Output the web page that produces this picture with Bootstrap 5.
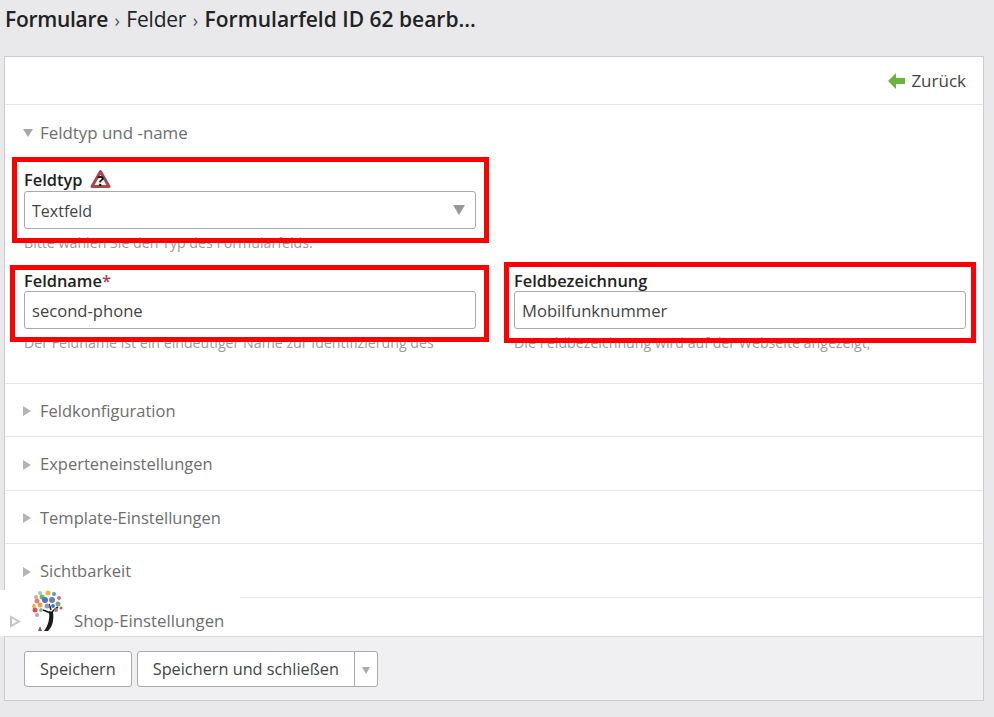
<!DOCTYPE html>
<html lang="de">
<head>
<meta charset="utf-8">
<title>Formularfeld bearbeiten</title>
<link href="https://cdn.jsdelivr.net/npm/bootstrap@5.3.0/dist/css/bootstrap.min.css" rel="stylesheet">
<style>
html,body{height:717px;overflow:hidden}
body{background:#e9e9ec;font-family:"Open Sans","Noto Sans",sans-serif;color:#333;font-size:16px}
.page-title{height:56px;margin:0;padding:5px 0 0 5px;font-size:21px;line-height:28px;font-weight:400;color:#222;font-family:"Open Sans",sans-serif}
.page-title b{font-weight:600}
.page-title .crumb-first{letter-spacing:-.3px}
.page-title .crumb-mid{letter-spacing:-.2px}
.page-title .sep{color:#555;font-size:18px;margin:0 1px}
.edit-panel{margin-left:4px;width:980px;height:645px;background:#fff;border:1px solid #ccc;position:relative}
.top-bar{height:48px;border-bottom:1px solid #e4e4e4;padding-right:17px}
.back-link{color:#444;font-size:17px;text-decoration:none;gap:6px}
.sect{border-bottom:1px solid #e4e4e4;height:53.5px;padding:2px 0 0 18px;color:#6e6e6e;font-size:16.5px;gap:9px}
.sect-open{height:278.75px;display:block;padding:0 17px 0 19px}
.sect-head{height:56px;margin:0 0 8px -1px;gap:7px;color:#6e6e6e;font-size:16.9px}
.tri-r{width:0;height:0;border-style:solid;border-width:5px 0 5px 8px;border-color:transparent transparent transparent #b5b5b5}
.tri-d{width:0;height:0;border-style:solid;border-width:8px 5px 0 5px;border-color:#a8a8a8 transparent transparent transparent}
.field-row{--bs-gutter-x:38px;--bs-gutter-y:0}
.field{position:relative}
.field-a{height:100px}
.field-lbl{display:block;margin:0;font-weight:600;color:#222;font-size:16.4px;line-height:22px;height:22px;white-space:nowrap}
.lbl-low{line-height:24px}
.warn-ico{vertical-align:-3px;margin-left:3px;margin-top:-5px}
.req{color:#b5394a}
.field .form-control,.field .form-select{height:38px;border:1px solid #aaa;border-radius:3px;font-size:16.6px;color:#444;padding:0 7px;box-shadow:none}
.field .form-select{background-image:url("data:image/svg+xml,%3Csvg xmlns='http://www.w3.org/2000/svg' viewBox='0 0 12 10'%3E%3Cpath fill='%23999' d='M0 0h12L6 10z'/%3E%3C/svg%3E");background-size:12px 10px;background-position:right 10px center;font-size:16px;padding-top:1px}
.hint{font-size:14.2px;line-height:16px;color:#9a9a9a;margin:6px 0 0;white-space:nowrap}
.red-box{position:absolute;border:5px solid #f00;pointer-events:none}
.rb-1{left:-12px;right:-13px;top:-12px;height:86px}
.rb-2{left:-14px;right:-13px;top:-4px;height:77px}
.rb-3{left:-10px;right:-10px;top:-7px;height:81px}
.sect-last{height:38.25px;border-bottom:0}
.logo-patch{position:absolute;left:-5px;top:533px;width:240px;height:46px;background:#fff}
.logo-tree{position:absolute;left:31px;top:0;width:32px;height:41px}
.tri-o{position:absolute;left:9px;top:25px}
.shop-text{position:absolute;left:74px;top:19px;color:#6e6e6e;font-size:16.8px;line-height:24px}
.foot-bar{height:64px;background:#f0f0f2;border-top:1px solid #d8d8d8;padding-left:19px;gap:5px}
.act-btn{height:36px;padding:0 15px;font-size:16.3px;color:#444;background:#fff;border:1px solid #aaa;border-radius:3px;line-height:34px}
.act-btn:hover{background:#fff;color:#444;border-color:#aaa}
.act-caret{padding:0;width:24px}
.act-caret span{display:inline-block;width:0;height:0;border-style:solid;border-width:7px 4px 0 4px;border-color:#aaa transparent transparent transparent;vertical-align:middle}
</style>
</head>
<body>
<h1 class="page-title"><b class="crumb-first">Formulare</b> <span class="sep">›</span> <span class="crumb-mid">Felder</span> <span class="sep">›</span> <b>Formularfeld ID 62 bearb...</b></h1>
<div class="edit-panel d-flex flex-column">
  <div class="top-bar d-flex justify-content-end align-items-center flex-shrink-0">
    <a class="back-link d-flex align-items-center" href="#">
      <svg width="17" height="18" viewBox="0 0 17 18" aria-hidden="true"><path fill="#6cb33f" d="M0 9 8 1v5h9v6H8v5z"/></svg>
      Zurück
    </a>
  </div>
  <div class="sect sect-open flex-shrink-0">
    <div class="sect-head d-flex align-items-center"><span class="tri-d"></span><span>Feldtyp und -name</span></div>
    <div class="row field-row">
      <div class="col-6">
        <div class="field field-a">
          <div class="red-box rb-1"></div>
          <label class="field-lbl" for="ft">Feldtyp
            <svg class="warn-ico" width="21" height="20" viewBox="0 0 21 20" aria-hidden="true"><path d="M10.500 2.500 19 17.500H2z" fill="#fff" stroke="#a5484f" stroke-width="3" stroke-linejoin="round"/><text x="10.500" y="17" font-size="14" font-weight="700" text-anchor="middle" fill="#111" font-family="Open Sans, sans-serif">?</text></svg>
          </label>
          <select class="form-select" id="ft"><option>Textfeld</option></select>
          <p class="hint">Bitte wählen Sie den Typ des Formularfelds.</p>
        </div>
      </div>
    </div>
    <div class="row field-row">
      <div class="col-6">
        <div class="field">
          <div class="red-box rb-2"></div>
          <label class="field-lbl lbl-low" for="fn">Feldname<span class="req">*</span></label>
          <input class="form-control" id="fn" value="second-phone">
          <p class="hint">Der Feldname ist ein eindeutiger Name zur Identifizierung des</p>
        </div>
      </div>
      <div class="col-6">
        <div class="field">
          <div class="red-box rb-3"></div>
          <label class="field-lbl lbl-low" for="fb">Feldbezeichnung</label>
          <input class="form-control" id="fb" value="Mobilfunknummer">
          <p class="hint">Die Feldbezeichnung wird auf der Webseite angezeigt,</p>
        </div>
      </div>
    </div>
  </div>
  <div class="sect d-flex align-items-center flex-shrink-0"><span class="tri-r"></span><span>Feldkonfiguration</span></div>
  <div class="sect d-flex align-items-center flex-shrink-0"><span class="tri-r"></span><span>Experteneinstellungen</span></div>
  <div class="sect d-flex align-items-center flex-shrink-0"><span class="tri-r"></span><span>Template-Einstellungen</span></div>
  <div class="sect d-flex align-items-center flex-shrink-0"><span class="tri-r"></span><span>Sichtbarkeit</span></div>
  <div class="sect sect-last flex-shrink-0"></div>
  <div class="foot-bar d-flex align-items-center flex-shrink-0">
    <button class="btn act-btn" type="button">Speichern</button>
    <div class="btn-group">
      <button class="btn act-btn" type="button">Speichern und schließen</button>
      <button class="btn act-btn act-caret" type="button" aria-label="Mehr"><span></span></button>
    </div>
  </div>
  <div class="logo-patch">
    <svg class="tri-o" width="12" height="13" viewBox="0 0 12 13" aria-hidden="true"><path d="M2 2l8 4.500-8 4.500z" fill="#fff" stroke="#c4c4c4" stroke-width="2"/></svg>
    <svg class="logo-tree" viewBox="0 0 32 41" aria-hidden="true">
      <path d="M20 24c-2-2-5-3-8-4M21 22c2-2 4-4 6-5M20 20l-2-6" fill="none" stroke="#1a1a1a" stroke-width="1.500"/>
      <path d="M13 41c4-5 6-12 5-20l4 1c1 7 0 14-5 19z" fill="#1a1a1a"/>
      <circle cx="5" cy="7" r="2" fill="#e8a0a0"/><circle cx="9" cy="3" r="2" fill="#9ccf9c"/><circle cx="6" cy="11" r="2.500" fill="#e77b7b"/><circle cx="11" cy="7" r="2.500" fill="#6fb06f"/><circle cx="17" cy="3" r="2.500" fill="#e9b44c"/><circle cx="23" cy="4" r="2" fill="#4f9ec9"/><circle cx="28" cy="8" r="2" fill="#d96f8a"/>
      <circle cx="14" cy="10" r="3" fill="#4a76b8"/><circle cx="21" cy="10" r="3" fill="#6a7fc0"/><circle cx="9" cy="15" r="2.500" fill="#e2a24a"/><circle cx="27" cy="14" r="2.500" fill="#6fb06f"/><circle cx="3" cy="16" r="2" fill="#e9b44c"/><circle cx="4" cy="20" r="2.500" fill="#d9534f"/><circle cx="10" cy="20" r="2" fill="#7cc08a"/><circle cx="25" cy="20" r="2" fill="#888"/><circle cx="6" cy="25" r="2" fill="#e58fa0"/><circle cx="16" cy="16" r="2.500" fill="#9a8fd0"/><circle cx="22" cy="16" r="2" fill="#4a76b8"/><circle cx="30" cy="18" r="1.500" fill="#d9534f"/>
      <path d="M7 41l2-5 2 5z" fill="#7a5a4a"/>
    </svg>
    <span class="shop-text">Shop-Einstellungen</span>
  </div>
</div>
</body>
</html>
